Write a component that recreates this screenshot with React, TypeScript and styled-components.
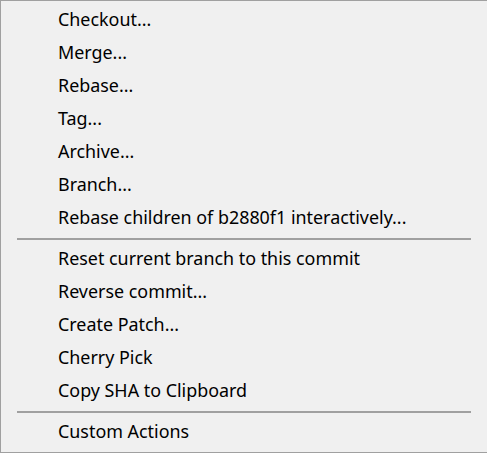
import React from 'react';
import styled, {createGlobalStyle} from 'styled-components';

const GlobalStyle = createGlobalStyle`
    html, body {
        margin: 0;
        padding: 0;
        background: #f0f0f0;
    }
`;

const Menu = styled.div`
    width: 487px;
    height: 453px;
    box-sizing: border-box;
    background: #f0f0f0;
    border: 1px solid #a0a0a0;
    border-right: none;
    padding: 2px 0;
    font-family: "Noto Sans", "Open Sans", sans-serif;
    font-size: 17.9px;
    color: #000;
`;

const MenuItem = styled.div`
    height: 33px;
    line-height: 33px;
    padding-left: 57px;
    white-space: nowrap;
`;

const Separator = styled.div`
    height: 2px;
    background: #a0a0a0;
    margin: 4px 16px 2px 16px;
`;

type Entry = string | null;

const entries: Entry[] = [
    'Checkout...',
    'Merge...',
    'Rebase...',
    'Tag...',
    'Archive...',
    'Branch...',
    'Rebase children of b2880f1 interactively...',
    null,
    'Reset current branch to this commit',
    'Reverse commit...',
    'Create Patch...',
    'Cherry Pick',
    'Copy SHA to Clipboard',
    null,
    'Custom Actions',
];

const App: React.FC = () => (
    <>
        <GlobalStyle/>
        <Menu>
            {entries.map((label, i) =>
                label === null
                    ? <Separator key={i}/>
                    : <MenuItem key={i}>{label}</MenuItem>
            )}
        </Menu>
    </>
);

export default App;
